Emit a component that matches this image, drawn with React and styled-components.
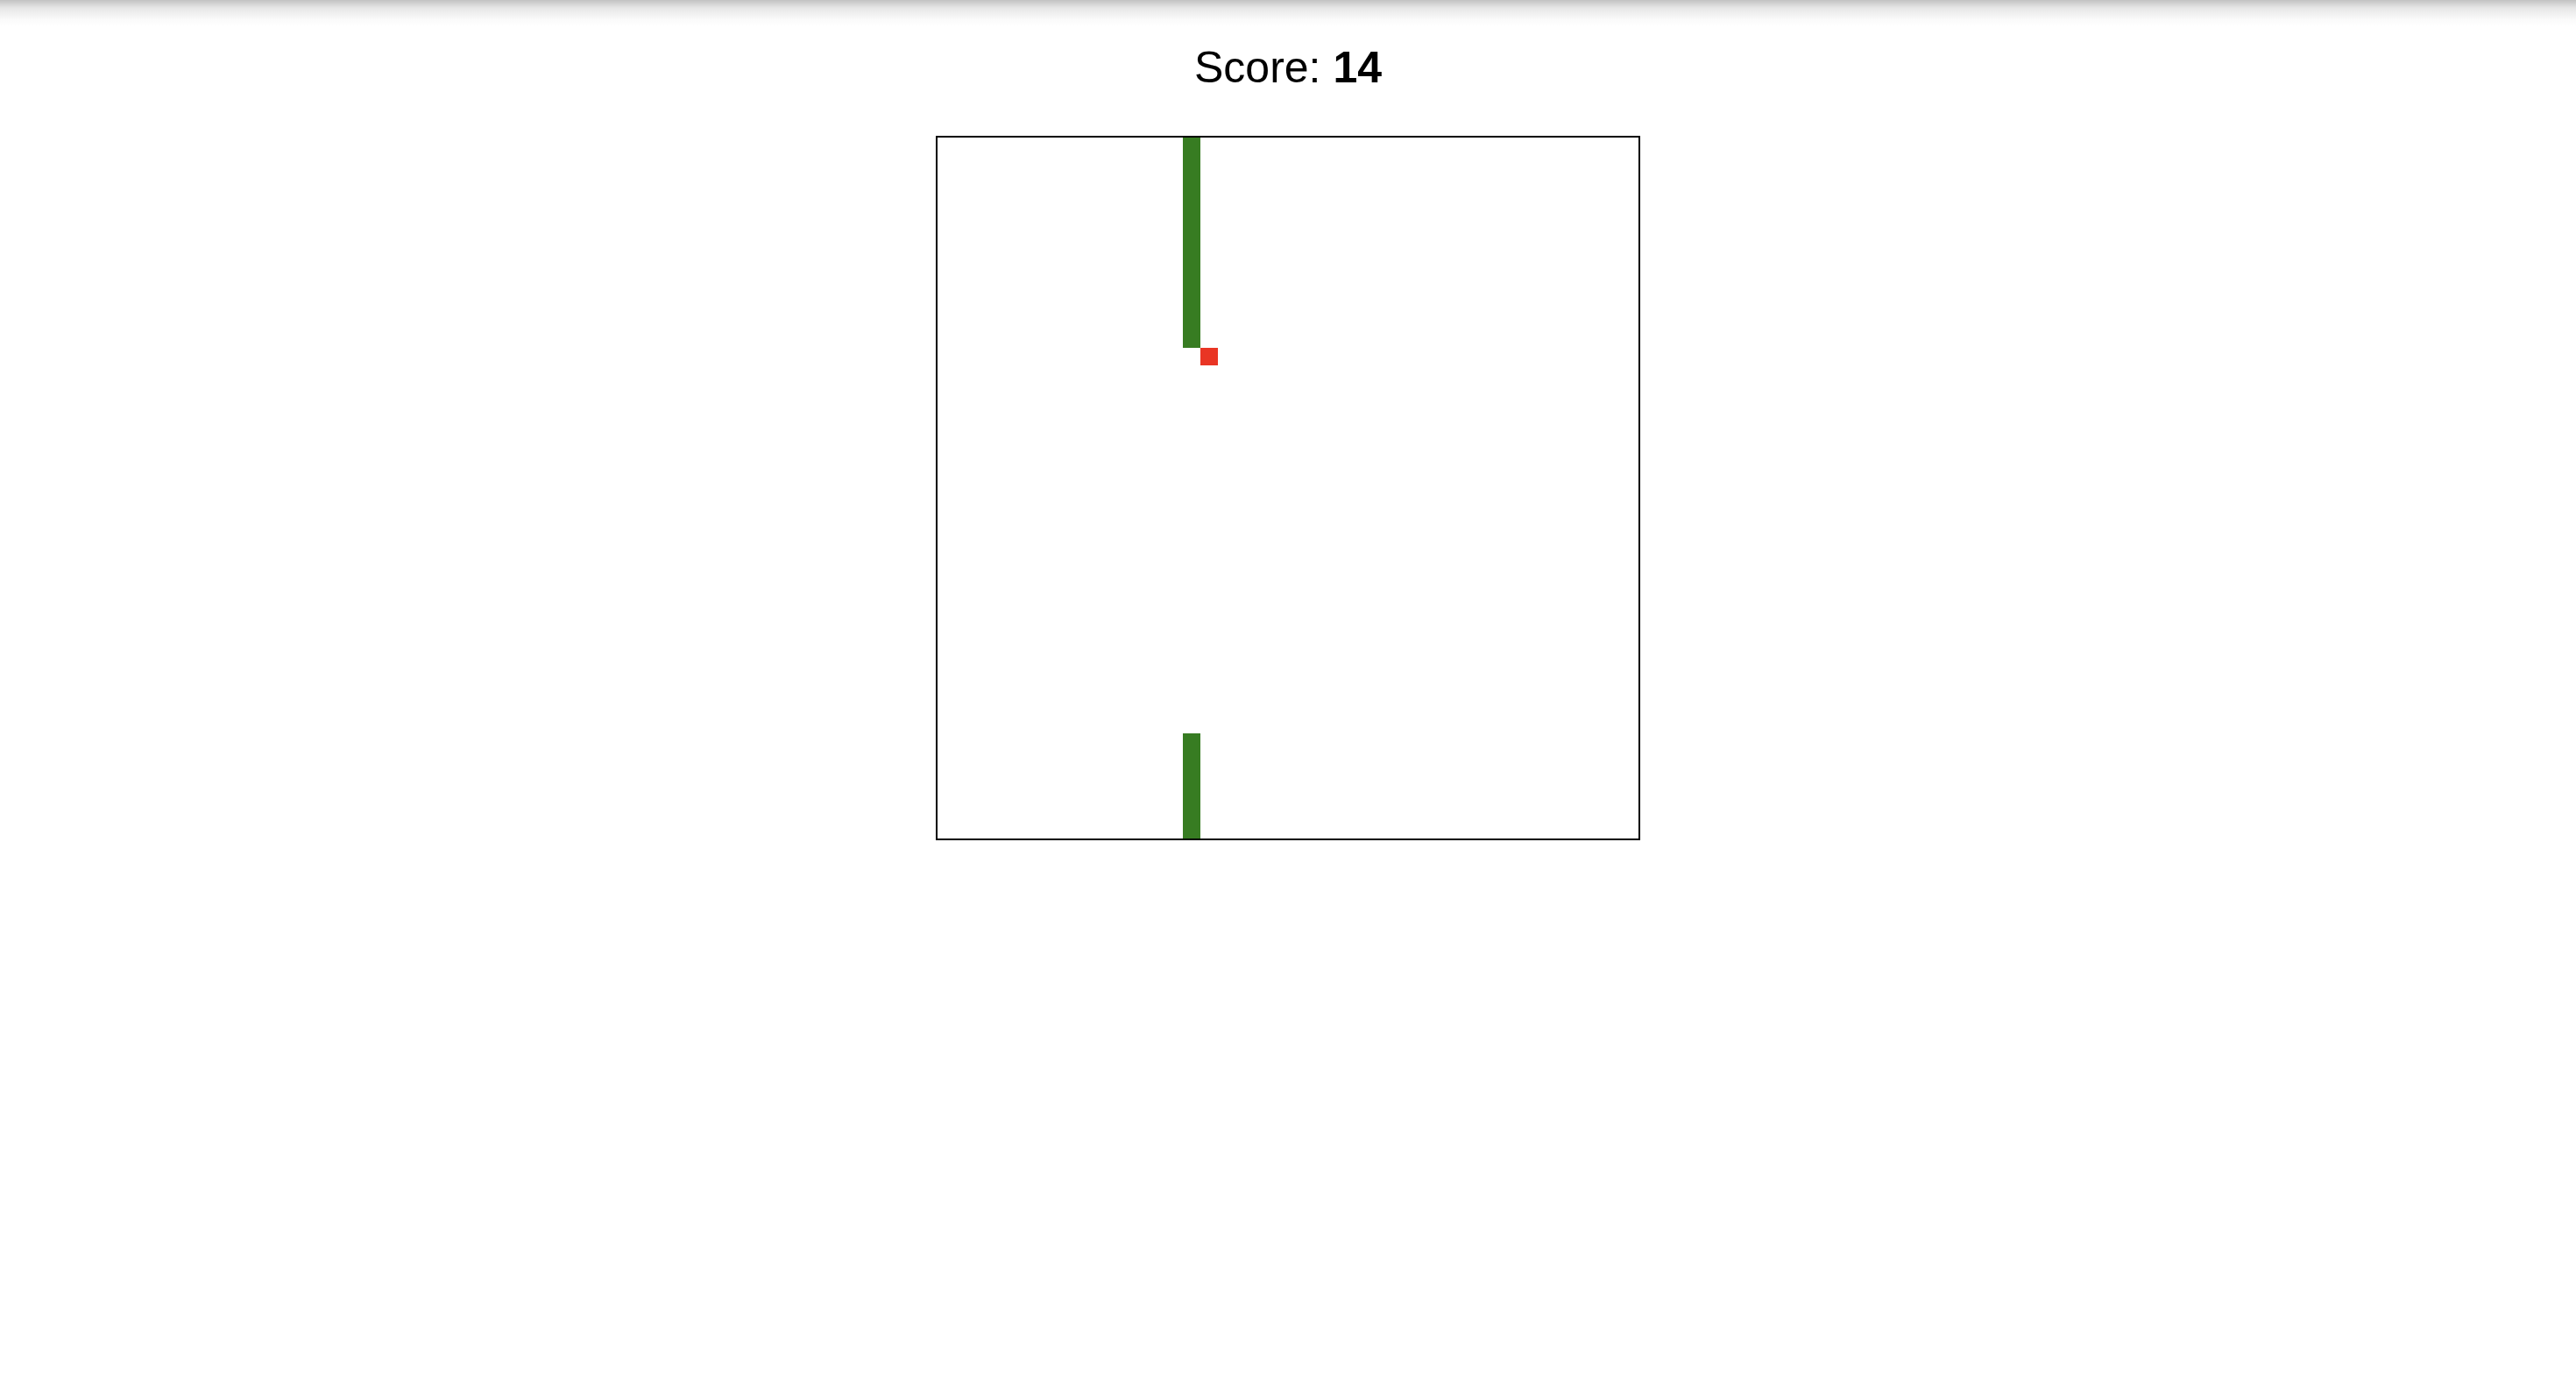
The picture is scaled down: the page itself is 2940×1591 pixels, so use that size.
import styled, { createGlobalStyle } from "styled-components";

const CELL = 20;
const GRID = 40;

const GlobalStyle = createGlobalStyle`
  html, body {
    margin: 0;
    padding: 0;
    background: #fff linear-gradient(to bottom, #c2c2c2 0px, #e6e6e6 9px, #fafafa 22px, #ffffff 30px) no-repeat;
    background-size: 100% 30px;
    font-family: "Liberation Sans", Arial, sans-serif;
    color: #000;
  }
  body {
    min-height: 1591px;
  }
`;

const Page = styled.div`
  display: flex;
  flex-direction: column;
  align-items: center;
  padding-top: 50px;
  gap: 50px;
`;

const ScoreLine = styled.h1`
  margin: 0;
  font-size: 50px;
  font-weight: 400;
  line-height: 55px;
  color: #000;

  b {
    font-weight: 700;
  }
`;

const Board = styled.div`
  display: grid;
  grid-template-columns: repeat(${GRID}, ${CELL}px);
  grid-template-rows: repeat(${GRID}, ${CELL}px);
  border: 2px solid #000;
  background: #fff;
`;

const Cell = styled.div`
  grid-column: ${({ $x }) => $x + 1};
  grid-row: ${({ $y }) => $y + 1};
  background: ${({ $food }) => ($food ? "#e93524" : "#377c22")};
`;

// snake wraps round the bottom edge, head near the food
const snake = [
  ...[34, 35, 36, 37, 38, 39].map((y) => ({ x: 14, y })),
  ...Array.from({ length: 12 }, (_, y) => ({ x: 14, y })),
];
const food = { x: 15, y: 12 };

export default function App() {
  return (
    <>
      <GlobalStyle />
      <Page>
        <ScoreLine>
          Score: <b>14</b>
        </ScoreLine>
        <Board>
          {snake.map((s, i) => (
            <Cell key={i} $x={s.x} $y={s.y} />
          ))}
          <Cell $x={food.x} $y={food.y} $food />
        </Board>
      </Page>
    </>
  );
}
